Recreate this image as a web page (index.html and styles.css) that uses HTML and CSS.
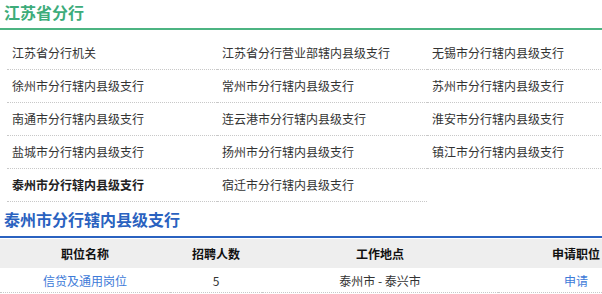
FILE: index.html
```html
<!DOCTYPE html>
<html lang="zh-CN">
<head>
<meta charset="utf-8">
<title>江苏省分行</title>
<link rel="stylesheet" href="styles.css">
</head>
<body>
<div class="page">
  <h2 class="prov-title">江苏省分行</h2>
  <ul class="branch-list">
    <li class="branch">江苏省分行机关</li>
    <li class="branch">江苏省分行营业部辖内县级支行</li>
    <li class="branch">无锡市分行辖内县级支行</li>
    <li class="branch">徐州市分行辖内县级支行</li>
    <li class="branch">常州市分行辖内县级支行</li>
    <li class="branch">苏州市分行辖内县级支行</li>
    <li class="branch">南通市分行辖内县级支行</li>
    <li class="branch">连云港市分行辖内县级支行</li>
    <li class="branch">淮安市分行辖内县级支行</li>
    <li class="branch">盐城市分行辖内县级支行</li>
    <li class="branch">扬州市分行辖内县级支行</li>
    <li class="branch">镇江市分行辖内县级支行</li>
    <li class="branch active">泰州市分行辖内县级支行</li>
    <li class="branch">宿迁市分行辖内县级支行</li>
  </ul>
  <h2 class="sub-title">泰州市分行辖内县级支行</h2>
  <table class="jobs">
    <colgroup>
      <col class="c1"><col class="c2"><col class="c3"><col class="c4">
    </colgroup>
    <thead>
      <tr><th>职位名称</th><th>招聘人数</th><th>工作地点</th><th>申请职位</th></tr>
    </thead>
    <tbody>
      <tr><td><a class="link">信贷及通用岗位</a></td><td>5</td><td>泰州市 - 泰兴市</td><td><a class="link">申请</a></td></tr>
    </tbody>
  </table>
</div>
</body>
</html>
```
FILE: styles.css
```css
html, body {
  margin: 0;
  padding: 0;
  background: #fff;
  overflow: hidden;
}
body {
  font-family: "Noto Sans CJK SC", "Microsoft YaHei", sans-serif;
  font-size: 12px;
  color: #333;
}
.page {
  width: 602px;
  overflow: hidden;
}
.prov-title {
  margin: 0;
  height: 28px;
  line-height: 24px;
  padding-left: 4px;
  font-size: 16px;
  font-weight: bold;
  color: #3dac7a;
  border-bottom: 2px solid #4cb482;
}
.branch-list {
  list-style: none;
  margin: 7px 0 0 7px;
  padding: 0;
  width: 640px;
  display: flex;
  flex-wrap: wrap;
}
.branch {
  width: 210px;
  box-sizing: border-box;
  padding-left: 5px;
  height: 33px;
  line-height: 32px;
  border-bottom: 1px dotted #c8c8c8;
  white-space: nowrap;
}
.branch.active {
  font-weight: bold;
  color: #222;
}
.sub-title {
  margin: 0;
  height: 34px;
  line-height: 34px;
  padding-left: 4px;
  font-size: 16px;
  font-weight: bold;
  color: #2a62c0;
  border-bottom: 2px solid #2a62c0;
}
.jobs {
  border-collapse: collapse;
  table-layout: fixed;
  width: 654px;
  margin-top: 1px;
}
.c1 { width: 170px; }
.c2 { width: 92px; }
.c3 { width: 236px; }
.c4 { width: 156px; }
.jobs th {
  background: #eeeeee;
  height: 29px;
  padding: 0;
  font-weight: bold;
  color: #111;
  text-align: center;
}
.jobs td {
  height: 24px;
  padding: 0;
  text-align: center;
  border-bottom: 1px dotted #c8c8c8;
  color: #333;
}
.link {
  color: #3d7ad8;
  text-decoration: none;
}
```
